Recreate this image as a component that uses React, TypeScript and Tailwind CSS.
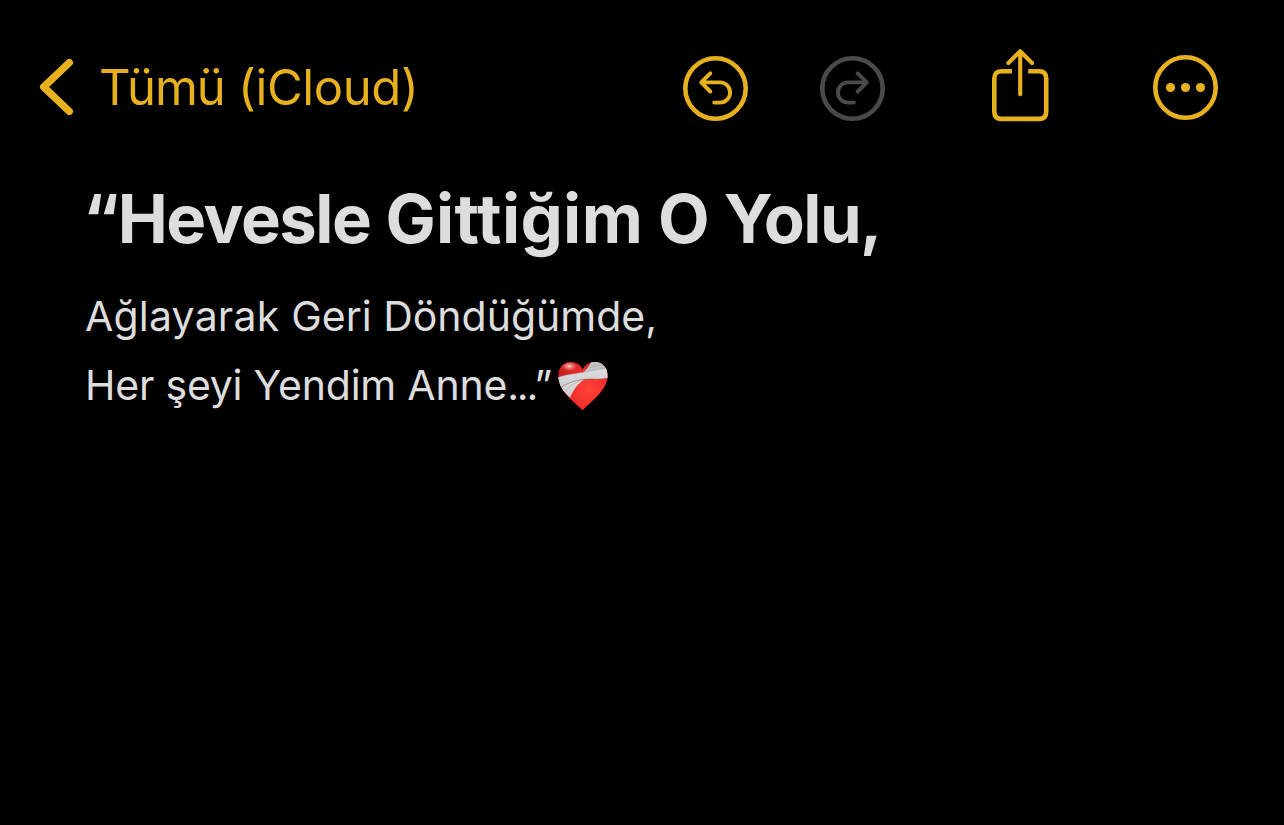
import type { ReactNode } from "react";

const UndoIcon = ({ flipped = false }: { flipped?: boolean }) => (
  <svg
    viewBox="0 0 65 65"
    className={flipped ? "size-[65px] -scale-x-100" : "size-[65px]"}
    fill="none"
    stroke="currentColor"
    strokeLinecap="round"
    strokeLinejoin="round"
  >
    <circle cx="32.5" cy="32.5" r="30.2" strokeWidth="4.6" />
    <path
      d="M27.3 17.3 L18.2 26.4 L27.3 35.5 M18.8 26.4 H37 A10.1 10.1 0 0 1 37 46.6 H31.2"
      strokeWidth="3.9"
    />
  </svg>
);

const ShareIcon = () => (
  <svg
    viewBox="0 0 57 73"
    className="h-[73px] w-[57px]"
    fill="none"
    stroke="currentColor"
    strokeLinejoin="round"
  >
    <path
      d="M20 22.3 H9.5 Q2.3 22.3 2.3 29.5 V62.7 Q2.3 69.9 9.5 69.9 H47 Q54.2 69.9 54.2 62.7 V29.5 Q54.2 22.3 47 22.3 H36.2"
      strokeWidth="4.6"
    />
    <path d="M28.2 2.6 V45.2 M16.4 14 L28.2 2.2 L40 14" strokeWidth="4.1" strokeLinecap="round" />
  </svg>
);

const MoreIcon = () => (
  <svg viewBox="0 0 65 65" className="size-[65px]" fill="currentColor">
    <circle cx="32.5" cy="32.5" r="30.2" fill="none" stroke="currentColor" strokeWidth="4.6" />
    <circle cx="17.5" cy="32.5" r="4.6" />
    <circle cx="32.5" cy="32.5" r="4.6" />
    <circle cx="47.5" cy="32.5" r="4.6" />
  </svg>
);

const MendingHeart = () => (
  <svg viewBox="0 0 150 150" className="size-[50px]" role="img" aria-label="❤️‍🩹">
    <defs>
      <radialGradient id="heart" cx="0.62" cy="0.58" r="0.62">
        <stop offset="0" stopColor="#ff4338" />
        <stop offset="0.6" stopColor="#f22e2c" />
        <stop offset="1" stopColor="#c9201f" />
      </radialGradient>
      <radialGradient id="shine" cx="0.5" cy="0.4" r="0.5">
        <stop offset="0" stopColor="#ffd9d2" />
        <stop offset="1" stopColor="#ff5a4c" stopOpacity="0" />
      </radialGradient>
      <linearGradient id="band" x1="0" y1="0" x2="0" y2="1">
        <stop offset="0" stopColor="#dededf" />
        <stop offset="1" stopColor="#cbccd0" />
      </linearGradient>
      <clipPath id="heart-shape">
        <path d="M74 148 C60 130 3 96 1 47 C0 16 20 3 39 3 C56 3 68 12 74 25 C81 11 95 2 111 2 C136 3 150 22 149 47 C146 92 90 128 74 148 Z" />
      </clipPath>
    </defs>
    <g clipPath="url(#heart-shape)">
      <rect width="150" height="150" fill="url(#heart)" />
      <ellipse cx="34" cy="19" rx="27" ry="16" fill="url(#shine)" />
      <path d="M76 34 C88 24 94 12 102 0 H150 V30 Z" fill="#c3c4c8" />
      <path d="M94 20 C110 16 124 12 142 10" fill="none" stroke="#a3a4a9" strokeWidth="2" />
      <path d="M86 50 C66 62 48 80 36 110 L0 76 C14 64 34 56 50 50 Z" fill="url(#band)" />
      <path d="M72 56 C50 65 34 76 22 90" fill="none" stroke="#a3a4a9" strokeWidth="2" />
      <path
        d="M-4 50 C26 40 56 38 92 31 C116 26 134 22 154 21 V50 C130 57 104 53 76 55 C46 59 26 68 4 82 Z"
        fill="url(#band)"
      />
      <path
        d="M4 82 C26 68 46 59 76 55 C104 53 130 57 154 50"
        fill="none"
        stroke="#85565a"
        strokeOpacity="0.8"
        strokeWidth="2"
      />
      <path
        d="M10 46 C36 38 62 37 92 31 C116 26 134 22 154 21"
        fill="none"
        stroke="#8f9095"
        strokeOpacity="0.7"
        strokeWidth="1.5"
      />
    </g>
  </svg>
);

const ToolbarButton = ({ label, children }: { label: string; children: ReactNode }) => (
  <button type="button" aria-label={label} className="shrink-0">
    {children}
  </button>
);

const App = () => {
  return (
    <div className="flex h-[825px] w-[1284px] flex-col overflow-hidden bg-black font-['Inter',sans-serif] text-[#dddddd]">
      <header className="flex h-[176px] shrink-0 items-center pr-[66px] pl-[39px] text-[#e6b01e]">
        <button type="button" className="flex items-center gap-[25px] whitespace-nowrap">
          <svg
            viewBox="0 0 35 58"
            className="mb-0.5 h-[58px] w-[35px]"
            fill="none"
            stroke="currentColor"
            strokeWidth="7.4"
            strokeLinecap="round"
            strokeLinejoin="round"
          >
            <path d="M30.3 4.6 L4.7 29 L30.3 53.4" />
          </svg>
          <span className="text-[49px] leading-[60px] tracking-[-0.4px]">
            <span className="tracking-[-1.1px]">Tümü</span> (iCloud)
          </span>
        </button>

        <div className="ml-auto flex items-center">
          <ToolbarButton label="Undo">
            <UndoIcon />
          </ToolbarButton>
          <div className="ml-[72px] flex text-[#4a4a4a]">
            <ToolbarButton label="Redo">
              <UndoIcon flipped />
            </ToolbarButton>
          </div>
          <div className="mb-[5px] ml-[107px] flex">
            <ToolbarButton label="Share">
              <ShareIcon />
            </ToolbarButton>
          </div>
          <div className="mb-px ml-[104px] flex">
            <ToolbarButton label="More">
              <MoreIcon />
            </ToolbarButton>
          </div>
        </div>
      </header>

      <main className="pt-px pl-[85px] whitespace-nowrap">
        <h1 className="-ml-0.5 text-[67px] leading-[84px] font-bold tracking-[-0.9px]">
          <span className="tracking-[-1.5px]">“Hevesle</span>{" "}
          <span className="tracking-[0.35px]">Gittiğim</span> O{" "}
          <span className="tracking-[-1.6px]">Yolu,</span>
        </h1>
        <div className="mt-[21px] text-[41px] leading-[69px]">
          <p>
            <span className="tracking-[0.2px]">Ağlayarak </span>
            <span>Geri Döndüğümde,</span>
          </p>
          <p className="flex items-center tracking-[-0.22px]">
            <span>
              Her şeyi Yendim Anne<span className="tracking-[-2.1px]">...</span>
              <span className="-ml-0.5">”</span>
            </span>
            <span className="ml-[6px]">
              <MendingHeart />
            </span>
          </p>
        </div>
      </main>
    </div>
  );
};

export default App;
